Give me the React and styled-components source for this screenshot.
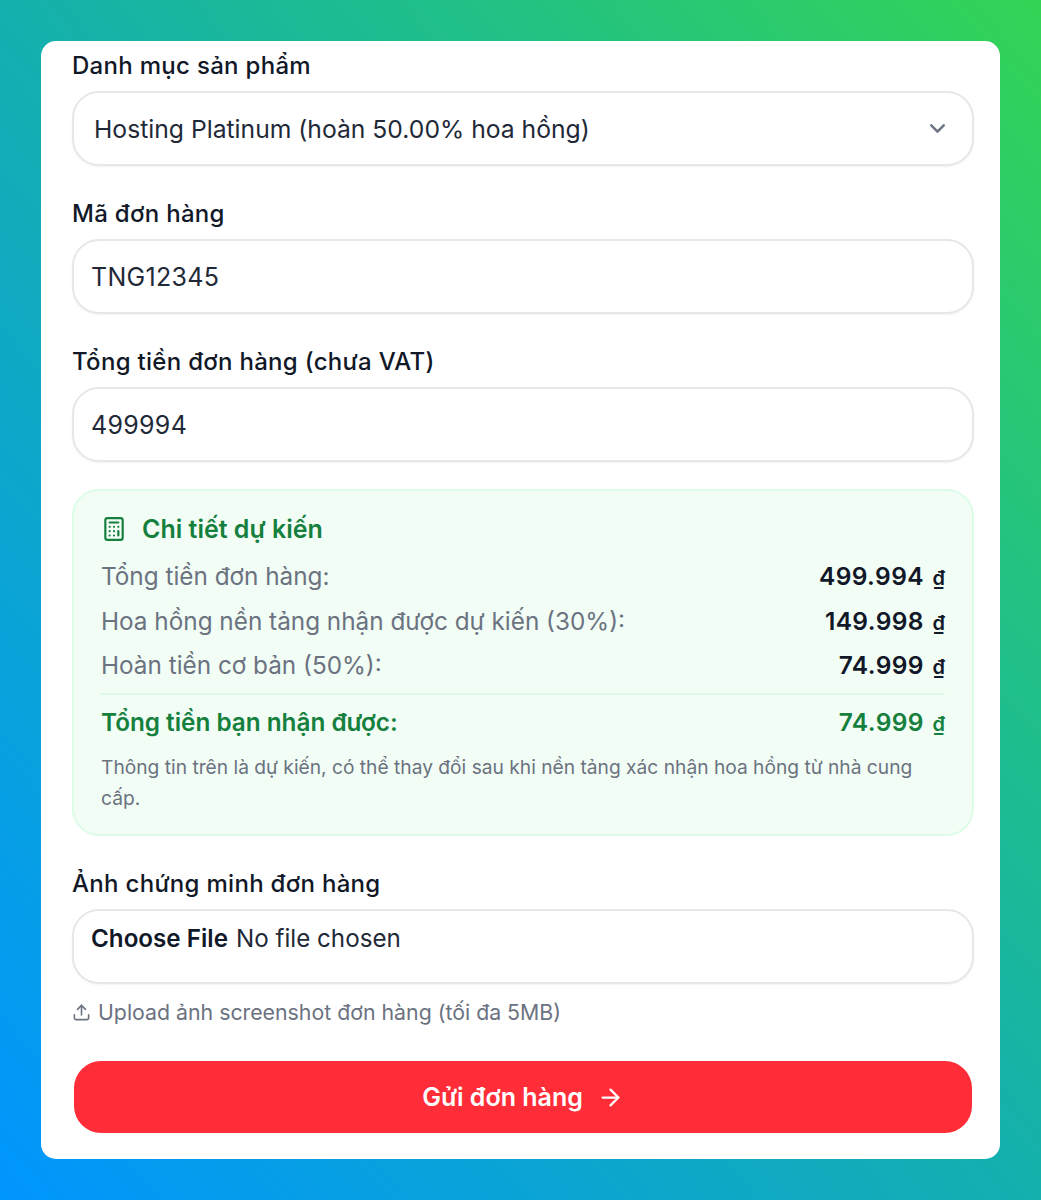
import React from "react";
import styled, { createGlobalStyle } from "styled-components";
import { ChevronDown, Calculator, Upload, ArrowRight } from "lucide-react";

const Global = createGlobalStyle`
  html, body { margin: 0; padding: 0; }
  * { box-sizing: border-box; }
`;
const Page = styled.div`
  width: 1041px; height: 1200px; padding: 41px;
  background: linear-gradient(to top right, #0096ff 0%, #14b0ae 50%, #33d455 100%);
  font-family: Inter, "Noto Sans", sans-serif; color: #111827;
`;
const Card = styled.div`
  height: 1118px; background: #fff; border-radius: 15px; padding: 10px 26px 0 31px;
  display: flex; flex-direction: column;
`;
const Label = styled.div`
  font-size: 24px; font-weight: 500; line-height: 29px; margin-bottom: 11px; letter-spacing: .3px;
`;
const Field = styled.div`
  height: 75px; border: 2px solid #e5e7eb; border-radius: 27px; background: #fff;
  display: flex; align-items: center; justify-content: space-between;
  padding: 0 ${p => p.$select ? "22px" : "17px"} 0 ${p => p.$select ? "20px" : "17px"};
  font-size: ${p => p.$select ? "24.7px" : "25px"};
  letter-spacing: ${p => p.$select ? "0" : ".3px"};
  margin-bottom: ${p => p.$gap || 33}px; color: #1f2937;
  box-shadow: 0 1px 2px rgba(0,0,0,.05);
`;
const FileField = styled(Field)`
  align-items: flex-start; padding-top: 13px; font-size: 24.2px; letter-spacing: 0;
  strong { font-weight: 600; margin-right: 8px; color: #111827; }
`;
const Summary = styled.div`
  background: #f2fdf6; border: 2px solid #dcfce7; border-radius: 27px;
  height: 347px; padding: 22px 27px 0; margin-bottom: 33px;
`;
const Head = styled.div`
  display: flex; align-items: center; gap: 15px; color: #15803d; font-weight: 600; font-size: 25px; height: 32px; margin-bottom: 9px;
`;
const Row = styled.div`
  display: flex; justify-content: space-between; align-items: center; height: 44.5px;
  font-size: 24.3px; color: #6b7280;
  b { font-weight: 600; color: #111827; letter-spacing: .4px; font-size: 24.5px; }
`;
const Dong = styled.span`
  font-size: 20px; margin-left: 2px; text-decoration: underline; letter-spacing: 0;
`;
const Total = styled(Row)`
  border-top: 2px solid #dcfce7; margin-top: 5px; height: 56px; color: #15803d; font-weight: 600;
  b { color: #15803d; }
`;
const Note = styled.div`
  font-size: 19.2px; line-height: 31px; color: #6b7280; margin-top: 3px;
`;
const Hint = styled.div`
  display: flex; align-items: center; gap: 7px; font-size: 21.3px; color: #6b7280; height: 30px; margin-bottom: 34px;
`;
const Submit = styled.button`
  height: 72px; border: 0; border-radius: 27px; background: #ff2d37; color: #fff; margin-left: 2px; width: 898px;
  font: 600 25px Inter, sans-serif; display: flex; align-items: center; justify-content: center; gap: 14px;
`;
const Rows = [
  ["Tổng tiền đơn hàng:", "499.994"],
  ["Hoa hồng nền tảng nhận được dự kiến (30%):", "149.998"],
  ["Hoàn tiền cơ bản (50%):", "74.999"],
];
export default function App() {
  return (
    <Page>
      <Global />
      <Card>
        <Label>Danh mục sản phẩm</Label>
        <Field $select>Hosting Platinum (hoàn 50.00% hoa hồng)<ChevronDown size={25} strokeWidth={2.4} color="#6b7280" /></Field>
        <Label>Mã đơn hàng</Label>
        <Field>TNG12345</Field>
        <Label>Tổng tiền đơn hàng (chưa VAT)</Label>
        <Field $gap={27}>499994</Field>
        <Summary>
          <Head><Calculator size={26} />Chi tiết dự kiến</Head>
          {Rows.map(([a, b]) => <Row key={a}><span>{a}</span><b>{b} <Dong>₫</Dong></b></Row>)}
          <Total><span>Tổng tiền bạn nhận được:</span><b>74.999 <Dong>₫</Dong></b></Total>
          <Note>Thông tin trên là dự kiến, có thể thay đổi sau khi nền tảng xác nhận hoa hồng từ nhà cung cấp.</Note>
        </Summary>
        <Label>Ảnh chứng minh đơn hàng</Label>
        <FileField $gap={13}><span><strong>Choose File</strong>No file chosen</span></FileField>
        <Hint><Upload size={19} />Upload ảnh screenshot đơn hàng (tối đa 5MB)</Hint>
        <Submit>Gửi đơn hàng<ArrowRight size={27} /></Submit>
      </Card>
    </Page>
  );
}
